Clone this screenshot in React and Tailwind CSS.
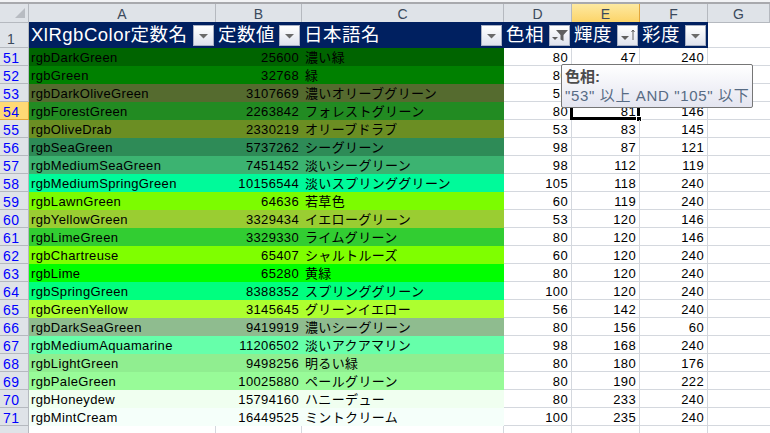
import React from 'react';

const rows = [
  [51, 'rgbDarkGreen', 25600, '濃い緑', 80, 47, 240],
  [52, 'rgbGreen', 32768, '緑', 80, '', ''],
  [53, 'rgbDarkOliveGreen', 3107669, '濃いオリーブグリーン', 53, '', ''],
  [54, 'rgbForestGreen', 2263842, 'フォレストグリーン', 80, 81, 146],
  [55, 'rgbOliveDrab', 2330219, 'オリーブドラブ', 53, 83, 145],
  [56, 'rgbSeaGreen', 5737262, 'シーグリーン', 98, 87, 121],
  [57, 'rgbMediumSeaGreen', 7451452, '淡いシーグリーン', 98, 112, 119],
  [58, 'rgbMediumSpringGreen', 10156544, '淡いスプリンググリーン', 105, 118, 240],
  [59, 'rgbLawnGreen', 64636, '若草色', 60, 119, 240],
  [60, 'rgbYellowGreen', 3329434, 'イエローグリーン', 53, 120, 146],
  [61, 'rgbLimeGreen', 3329330, 'ライムグリーン', 80, 120, 146],
  [62, 'rgbChartreuse', 65407, 'シャルトルーズ', 60, 120, 240],
  [63, 'rgbLime', 65280, '黄緑', 80, 120, 240],
  [64, 'rgbSpringGreen', 8388352, 'スプリンググリーン', 100, 120, 240],
  [65, 'rgbGreenYellow', 3145645, 'グリーンイエロー', 56, 142, 240],
  [66, 'rgbDarkSeaGreen', 9419919, '濃いシーグリーン', 80, 156, 60],
  [67, 'rgbMediumAquamarine', 11206502, '淡いアクアマリン', 98, 168, 240],
  [68, 'rgbLightGreen', 9498256, '明るい緑', 80, 180, 176],
  [69, 'rgbPaleGreen', 10025880, 'ペールグリーン', 80, 190, 222],
  [70, 'rgbHoneydew', 15794160, 'ハニーデュー', 80, 233, 240],
  [71, 'rgbMintCream', 16449525, 'ミントクリーム', 100, 235, 240],
];

const toRgb = (v) => `rgb(${v & 255},${(v >> 8) & 255},${(v >> 16) & 255})`;

const colHead = 'flex items-center justify-center pt-[2px] bg-[#dfe3e8] border-r border-[#b5b9bf] border-b text-[14px] leading-[16px] text-[#3b4a5c]';
const grid = 'grid grid-cols-[29px_187px_86px_202px_68px_68px_68px_62px]';

const FilterButton = ({ kind }) => (
  <div className="w-[21px] h-[21px] shrink-0 border border-[#a9b1c4] bg-gradient-to-b from-white to-[#dfe3ee]">
    {kind === 'filter' ? (
      <svg viewBox="0 0 19 19" className="w-full h-full">
        <path d="M6 4h12l-4.500 5v6l-3-1.500V9z" fill="#5f5f5f" />
        <path d="M2 11h6l-3 3z" fill="#5f5f5f" />
      </svg>
    ) : kind === 'sort' ? (
      <svg viewBox="0 0 19 19" className="w-full h-full">
        <path d="M3 10h8l-4 4z" fill="#5f5f5f" />
        <path d="M15 4v10M13.500 6L15 4l1.500 2" stroke="#5f5f5f" strokeWidth="1" fill="none" />
      </svg>
    ) : (
      <svg viewBox="0 0 19 19" className="w-full h-full">
        <path d="M5 8h9l-4.500 4.500z" fill="#6a6a6a" />
      </svg>
    )}
  </div>
);

const HeaderCell = ({ label, kind }) => (
  <div className="flex items-center justify-between overflow-hidden bg-[#002060] pl-[2px] pr-[1px] text-white text-[18.5px] tracking-[0.5px] whitespace-nowrap border-r border-[#002060]">
    <span>{label}</span>
    <FilterButton kind={kind} />
  </div>
);

const Tooltip = () => (
  <div className="absolute left-[561px] top-[64px] w-[192px] h-[44px] z-10 rounded-[2px] border border-[#767676] bg-gradient-to-b from-white to-[#e4e5f0] pl-[3px] pt-[3px] whitespace-nowrap">
    <div className="text-[15px] leading-[17px] font-bold text-[#4c4c4c]">色相:</div>
    <div className="text-[15px] leading-[22px] tracking-[0.65px] text-[#576b84]">"53" 以上 AND "105" 以下</div>
  </div>
);

const App = () => (
  <div className="relative w-[770px] h-[433px] overflow-hidden bg-white text-black text-[13px] font-['Liberation_Sans','Noto_Sans_CJK_JP',sans-serif]">
    <div className="h-[2px] bg-[#f2f3f5]" />
    <div className="h-[2px] bg-[#a8a9ad]" />

    <div className={`${grid} h-[18px]`}>
      <div className={`${colHead} relative`}>
        <svg viewBox="0 0 10 10" className="absolute left-[15px] top-[4px] w-[10px] h-[10px]">
          <path d="M10 0v10H0z" fill="#b8bcc2" />
        </svg>
      </div>
      <div className={colHead}>A</div>
      <div className={colHead}>B</div>
      <div className={colHead}>C</div>
      <div className={colHead}>D</div>
      <div className={`${colHead} bg-gradient-to-b from-[#fde9a0] to-[#fcd468] border-[#e2a63c] border-b-[#e2a63c]`}>E</div>
      <div className={colHead}>F</div>
      <div className={colHead}>G</div>
    </div>

    <div className={`${grid} h-[26px]`}>
      <div className="flex items-end pl-[7px] bg-[#dfe3e8] border-r border-b border-[#b5b9bf] text-[14px] leading-[16px] text-[#3b4a5c]">1</div>
      <HeaderCell label="XlRgbColor定数名" />
      <HeaderCell label="定数値" />
      <HeaderCell label="日本語名" />
      <HeaderCell label="色相" kind="filter" />
      <HeaderCell label="輝度" kind="sort" />
      <HeaderCell label="彩度" />
      <div className="border-b border-[#d4d8de]" />
    </div>

    {rows.map(([num, name, value, jp, hue, lum, sat]) => (
      <div key={num} className={`${grid} grid-rows-[18px] h-[18px] leading-[20px] tracking-[0.35px]`}>
        <div className={`pl-[3px] border-r border-b text-[14px] text-[#0000ff] ${num === 54 ? 'bg-[#ffd975] border-[#e2a63c]' : 'bg-[#dfe3e8] border-[#b5b9bf]'}`}>
          {num}
        </div>
        <div className="col-span-3 grid grid-cols-[187px_86px_202px]" style={{ backgroundColor: toRgb(value) }}>
          <div className="pl-[2px] whitespace-nowrap">{name}</div>
          <div className="pr-[3px] text-right">{value}</div>
          <div className="pl-[3px] whitespace-nowrap">{jp}</div>
        </div>
        <div className="pr-[3px] text-right border-r border-b border-[#d4d8de]">{hue}</div>
        <div className="relative pr-[3px] text-right border-r border-b border-[#d4d8de]">
          {lum}
          {num === 54 && (
            <>
              <div className="absolute -left-[2px] -top-[1px] -right-[1px] -bottom-[1px] border-[3px] border-black" />
              <div className="absolute -right-[3px] -bottom-[3px] w-[6px] h-[6px] bg-black border border-white" />
            </>
          )}
        </div>
        <div className="pr-[3px] text-right border-r border-b border-[#d4d8de]">{sat}</div>
        <div className="border-b border-[#d4d8de]" />
      </div>
    ))}

    <div className={`${grid} h-[18px]`}>
      <div className="bg-[#dfe3e8] border-r border-[#b5b9bf]" />
      <div className="border-r border-[#d4d8de]" />
      <div className="border-r border-[#d4d8de]" />
      <div className="border-r border-[#d4d8de]" />
      <div className="border-r border-[#d4d8de]" />
      <div className="border-r border-[#d4d8de]" />
      <div className="border-r border-[#d4d8de]" />
    </div>

    <Tooltip />
  </div>
);

export default App;
